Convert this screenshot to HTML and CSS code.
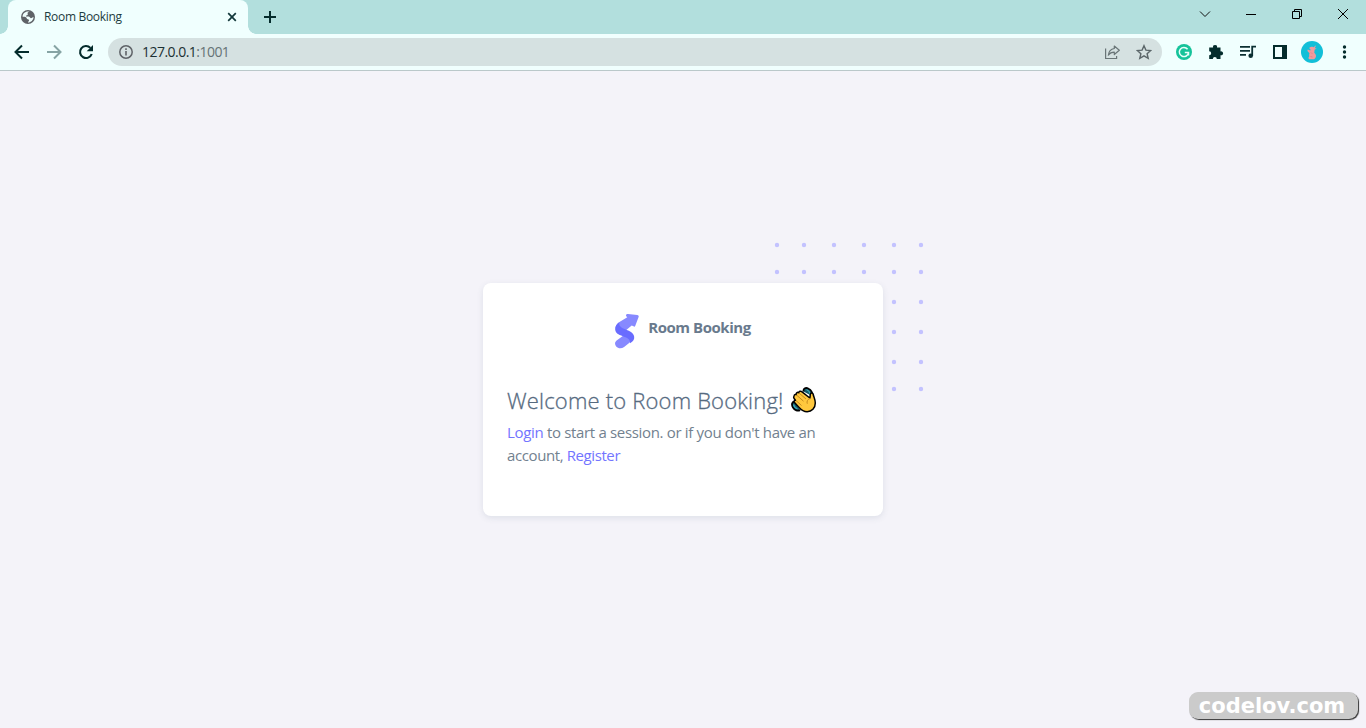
FILE: index.html
```html
<!DOCTYPE html>
<html lang="en">
<head>
<meta charset="utf-8">
<title>Room Booking</title>
<link rel="stylesheet" href="styles.css">
</head>
<body>
<header class="tabstrip">
  <div class="tab">
    <svg class="favicon" width="14" height="14" viewBox="0 0 14 14"><circle cx="7" cy="7" r="7" fill="#5f6368"/><path d="M8.500 1.600C6.800 2 6.200 2.900 6.700 3.900c.4.800-.3 1.400-1.300 1.500-.8.100-.6 1.100.2 1.200h2c1.200 0 1.300 1.600 2.300 1.600 1 0 1.500-.7 2.600-1.200C12.500 4.500 11 2.300 8.500 1.600z" fill="#5f6368"/><path d="M8.500 1.600C4.600.8 1.500 3.500 1.600 6.700c1.300.2 2.700 0 3.600.8.8.8.3 1.600 1.600 1.700.9.100 1.400.5 1.200 1.400-.1.700-.9 1-1 1.900 3 0 5.400-2.400 5.500-5.500-1.100.3-1.600 1.200-2.600 1.200-1 0-1.100-1.600-2.300-1.600h-2c-.8-.1-1-1.100-.2-1.200 1-.1 1.700-.7 1.300-1.500-.5-1 .3-1.900 1.800-2.300z" fill="#f0fffe"/><path d="M1.600 7.300c.1 2.600 1.900 4.500 4.100 4.900 0-1.200.2-1.700-.7-2.200-.9-.5-.5-1.300-1.200-2z" fill="#5f6368"/></svg>
    <span class="tab-title">Room Booking</span>
    <svg class="tab-close" width="10" height="10" viewBox="0 0 10 10"><path d="M1.200 1.200l7.600 7.600M8.800 1.200L1.200 8.800" stroke="#12383a" stroke-width="1.700"/></svg>
  </div>
  <svg class="new-tab" width="12" height="12" viewBox="0 0 12 12"><path d="M6 0v12M0 6h12" stroke="#042c2c" stroke-width="2"/></svg>
  <div class="window-controls">
    <svg width="12" height="12" viewBox="0 0 12 12"><path d="M1 3.500l5 5 5-5" fill="none" stroke="#111" stroke-width="1"/></svg>
    <svg width="12" height="12" viewBox="0 0 12 12"><path d="M1 6.500h10" stroke="#000"/></svg>
    <svg width="12" height="12" viewBox="0 0 12 12"><path d="M1.500 3.500h7v7h-7zM3.500 3.500v-2h7v7h-2" fill="none" stroke="#000"/></svg>
    <svg width="12" height="12" viewBox="0 0 12 12"><path d="M1 1l10 10M11 1L1 11" stroke="#000"/></svg>
  </div>
</header>
<nav class="toolbar">
  <div class="nav-buttons">
    <svg width="16" height="16" viewBox="0 0 16 16"><path d="M15 8H2M8 1.500L1.500 8 8 14.500" fill="none" stroke="#042c2c" stroke-width="2"/></svg>
    <svg width="16" height="16" viewBox="0 0 16 16"><path d="M1 8h13M8 1.500L14.500 8 8 14.500" fill="none" stroke="#86a4a4" stroke-width="2"/></svg>
    <svg width="16" height="16" viewBox="0 0 16 16"><path d="M13.700 10A6 6 0 1 1 12.400 3.900" fill="none" stroke="#042c2c" stroke-width="2.100"/><path d="M15 1v6.300H8.700z" fill="#042c2c"/></svg>
  </div>
  <div class="address">
    <svg width="14" height="14" viewBox="0 0 14 14"><circle cx="7" cy="7" r="6.200" fill="none" stroke="#5f6368" stroke-width="1.500"/><path d="M7 6v4.500M7 3.300v1.700" stroke="#5f6368" stroke-width="1.600"/></svg>
    <span class="url">127.0.0.1<span class="port">:1001</span></span>
    <svg class="share" width="16" height="16" viewBox="0 0 16 16"><path d="M1.600 4.500v10h11v-2.500" fill="none" stroke="#6a7577" stroke-width="1.200"/><path d="M10.300 2l5 4.300-5 4.200V8.200c-2.600 0-4.500.8-6 3 .4-3.500 2.400-6.200 6-6.700z" fill="none" stroke="#6a7577" stroke-width="1.200" stroke-linejoin="round"/></svg>
    <svg width="16" height="16" viewBox="0 0 16 16"><path d="M8 1.700l1.900 4.400 4.800.4-3.600 3.200 1.100 4.700L8 11.900l-4.200 2.500 1.100-4.700L1.300 6.500l4.800-.4z" fill="none" stroke="#5b6669" stroke-width="1.400"/></svg>
  </div>
  <div class="extensions">
    <svg width="16" height="16" viewBox="0 0 16 16"><circle cx="8" cy="8" r="8" fill="#15c39a"/><path d="M11.600 5.200A4.600 4.600 0 1 0 12.500 8.600H8.800M12.500 8.500v3" fill="none" stroke="#e9fffb" stroke-width="1.500"/></svg>
    <svg width="16" height="16" viewBox="0 0 16 16"><path d="M1.200 3.500h3.900a2 2 0 1 1 3.900 0h3.500v3.900a2 2 0 1 1 0 3.800V15H8.800a2 2 0 0 0-4 0H1.200v-3.700a2 2 0 0 0 0-4z" fill="#042c2c"/></svg>
    <svg width="16" height="16" viewBox="0 0 16 16"><path d="M0 2.800h10M0 6.800h10M0 10.800h6" stroke="#0b3032" stroke-width="1.700"/><path d="M12.200 12V2.700H16" fill="none" stroke="#0b3032" stroke-width="1.800"/><circle cx="10.700" cy="11.800" r="2.300" fill="#0b3032"/></svg>
    <svg width="16" height="16" viewBox="0 0 16 16"><path d="M1 1h14v14H1z" fill="#042c2c"/><path d="M3 3h7v10H3z" fill="#f0fffe"/></svg>
    <svg class="avatar" width="22" height="22" viewBox="0 0 22 22"><circle cx="11" cy="11" r="11" fill="#12bfd8"/><path d="M8.500 6.500c1.500-.9 2.500-.8 4-.2l2.700-2-1.500 3 2 .1-2.200 1.400c.2 1.500-.3 2-.2 3 1.700 1.400 2.300 3.300 1.100 5.200l-1.300 1.200H8.200l-.9-1.100 1-1.800c-.3-1.300-.2-2 .2-3L6.400 10l.3-1.500 2.600 1c.4-.8.3-1.500-.8-1.700z" fill="#f29a9c"/><path d="M10 11.500l1.300 1.300M9.500 15.500l2 .5" fill="none" stroke="#d86e7c" stroke-width=".6"/></svg>
    <svg width="16" height="16" viewBox="0 0 16 16"><g fill="#042c2c"><circle cx="8.500" cy="3" r="1.700"/><circle cx="8.500" cy="8" r="1.700"/><circle cx="8.500" cy="13" r="1.700"/></g></svg>
  </div>
</nav>
<main class="page">
  <div class="card-wrap">
    <svg class="dots" width="148" height="148" viewBox="0 0 148 148">
      <g fill="none" stroke="#c3c2ff" stroke-width="4.400" stroke-linecap="round">
        <path id="row" d="M2 2h0M29 2h0M59 2h0M89 2h0M119 2h0M146 2h0"/>
        <use href="#row" y="27"/><use href="#row" y="57"/><use href="#row" y="87"/><use href="#row" y="117"/><use href="#row" y="144"/>
      </g>
    </svg>
    <section class="card">
      <div class="brand">
        <svg width="24" height="35" viewBox="0 0 24 35"><path d="M11 2Q10.800-.3 13 0l9.300.9q1.900.2 1.300 2l-3.300 8.900q-.7 1.400-1.800.5l-1.800-.9-7.200 6L3 20Q-2.500 13 4 8.200l8.300-5z" fill="#8789ff"/><path d="M2.300 26l7.500-5.500 8.800 2.500c-.8 3-2.500 4.500-4.500 6l-5 4c-2.600 2-6 1.700-7.900-.5-1.900-2.300-1.400-4.900 1.100-6.500z" fill="#8789ff"/><path d="M4.300 8.200c-.7 3.600 2 5.500 5.200 6.800 6.500 2.500 10.200 4.500 9.700 9.200-.5 2.500-2.200 3.700-4.200 5 .3-3.800-2-5.200-7-7C3 20.700.5 19 .2 15.500 0 12.300 1.900 9.900 4.300 8.200z" fill="#696cff"/></svg>
        <span class="brand-name">Room Booking</span>
      </div>
      <h1 class="heading"><span class="heading-text">Welcome to Room Booking!</span>
        <svg width="26" height="26" viewBox="0 0 26 26"><path d="M12.500 4.500C12 1 15 .2 17.500 1.800c2.500 1.200 4.500 4 3.500 7.200M3.500 14.500C.500 15 .500 18 2 20.500s5 4.200 7 2.500" fill="#145b68" stroke="#000" stroke-width="1.800"/><path d="M15.500 2.500c2 .8 3.200 2.200 3.700 4.500M2.500 17.500c.5 2.200 1.700 3.600 4 4.300" fill="none" stroke="#38a9bb" stroke-width="1.200"/><path d="M3 9c.3-1.300 1.200-1.900 2.300-1.400C5 5.700 6.500 4.900 7.700 5.700c.3-1.400 1.900-1.900 3-1l8.100 6.300c.5-1.800.2-2.700.7-4.200.5-1.200 2.200-1.200 2.600.2.500 2.900 2.200 5.400 2.200 9 0 5.300-3.600 8.700-8.200 8.700-3.700 0-6-1.900-8-4.200l-4.600-4.900c-.9-1.200-.3-2.300.9-2.400l-1.300-1.700c-.7-.9-.5-1.700-.1-2.500z" fill="#ffc83d" stroke="#000" stroke-width="1.500" stroke-linejoin="round"/><path d="M5.500 8l7 6.200M8 6l7 6M5 13.500l5.500 5M19 11.500c-2.600 1-3.500 3-2.700 5.200" fill="none" stroke="#c68b1e" stroke-width="1"/></svg>
      </h1>
      <p class="message"><a class="link">Login</a> to start a session. or if you don't have an<br><span class="line-short">account, <a class="link">Register</a></span></p>
    </section>
  </div>
</main>
<div class="watermark">codelov.com</div>
</body>
</html>
```
FILE: styles.css
```css
* { box-sizing: border-box; }
body { margin: 0; height: 728px; overflow: hidden; display: flex; flex-direction: column; background: #f4f3f9; font-family: "Open Sans", sans-serif; }
svg { display: block; flex: none; }
.tabstrip { height: 34px; flex: none; display: flex; align-items: center; padding-left: 8px; background: #b2dfdd; }
.tab { position: relative; width: 240px; height: 34px; display: flex; align-items: center; padding: 0 11px 0 13px; background: #f0fffe; border-radius: 8px 8px 0 0; }
.tab::before, .tab::after { content: ""; position: absolute; bottom: 0; width: 8px; height: 8px; }
.tab::before { left: -8px; background: radial-gradient(circle at 0 0, transparent 7.5px, #f0fffe 8px); }
.tab::after { right: -8px; background: radial-gradient(circle at 100% 0, transparent 7.5px, #f0fffe 8px); }
.tab-title { margin-left: 9px; font-size: 12px; line-height: 16px; letter-spacing: -0.32px; color: #1d3c40; white-space: nowrap; }
.tab-close { margin-left: auto; }
.new-tab { margin-left: 16px; }
.window-controls { margin: -6px 17px 0 auto; display: flex; gap: 34px; }
.toolbar { height: 37px; flex: none; display: flex; align-items: center; padding: 0 14px; background: #f0fffe; border-bottom: 1px solid #bac8ca; }
.nav-buttons { display: flex; gap: 16px; }
.address { width: 1054px; height: 28px; margin-left: 14px; padding: 0 10px 0 11px; display: flex; align-items: center; border-radius: 14px; background: #d5e1e1; }
.url { margin-left: 9px; font-size: 14px; line-height: 20px; letter-spacing: -0.53px; color: #1c3033; }
.port { color: #657376; }
.share { margin-left: auto; margin-right: 16px; }
.extensions { margin-left: 14px; display: flex; align-items: center; gap: 16px; }
.avatar { margin: 0 -3px; }
.page { flex: 1; display: flex; justify-content: center; align-items: flex-start; padding-top: 212px; }
.card-wrap { position: relative; width: 400px; }
.dots { position: absolute; top: -40px; right: -40px; overflow: visible; }
.card { position: relative; height: 233px; padding: 31px 24px 0; border-radius: 8px; background: #fff; box-shadow: 0 2px 6px rgba(67, 89, 113, .12); }
.brand { height: 35px; display: flex; justify-content: center; gap: 9px; }
.brand-name { font-size: 15px; font-weight: 700; line-height: 26px; color: #697a8d; white-space: nowrap; letter-spacing: -0.45px; }
.heading { display: flex; align-items: center; gap: 8px; height: 30px; margin: 36px 0 0; font-size: 22px; font-weight: 300; line-height: 30px; color: #566a7f; white-space: nowrap; }
.heading-text { width: 276px; letter-spacing: 0.18px; -webkit-text-stroke: 0.3px #566a7f; }
.message { margin: 6px 0 0; font-size: 15px; line-height: 23px; letter-spacing: -0.33px; color: #72818f; white-space: nowrap; }
.line-short { letter-spacing: -0.4px; }
.link { color: #7375ff; }
.watermark { position: absolute; left: 1189px; top: 692px; width: 169px; height: 27px; padding-right: 3px; border-radius: 9px; background: #cbcbcb; color: #fff; font: bold 21px/28px "DejaVu Sans", sans-serif; text-align: center; box-shadow: 1px 1px 1px #333; }
```
